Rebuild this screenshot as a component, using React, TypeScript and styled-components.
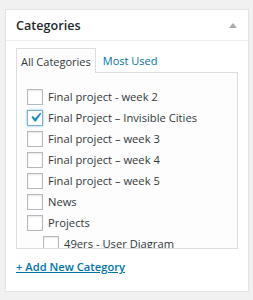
import React from "react";
import styled, { createGlobalStyle } from "styled-components";

type Category = { id: number; name: string; checked?: boolean; children?: Category[] };

const categories: Category[] = [
  { id: 1, name: "Final project - week 2" },
  { id: 2, name: "Final Project – Invisible Cities", checked: true },
  { id: 3, name: "Final project – week 3" },
  { id: 4, name: "Final project – week 4" },
  { id: 5, name: "Final project – week 5" },
  { id: 6, name: "News" },
  {
    id: 7,
    name: "Projects",
    children: [{ id: 8, name: "49ers - User Diagram" }],
  },
];

const CategoryList: React.FC<{ items: Category[]; nested?: boolean }> = ({ items, nested }) => (
  <List $nested={nested}>
    {items.map((item) => (
      <li key={item.id}>
        <Row>
          <CheckBox $checked={item.checked}>
            {item.checked && (
              <svg width="19" height="19" viewBox="0 0 20 20">
                <path d="M14.83 4.89l1.34.94-5.81 8.38H9.02L5.78 9.67l1.34-1.25 2.57 2.4z" fill="#1e8cbe" />
              </svg>
            )}
          </CheckBox>
          <Label>{item.name}</Label>
        </Row>
        {item.children && <CategoryList items={item.children} nested />}
      </li>
    ))}
  </List>
);

const App: React.FC = () => {
  return (
    <>
      <GlobalStyle />
      <Box>
        <Header>
          <Title>Categories</Title>
          <Toggle />
        </Header>
        <Inside>
          <Tabs>
            <Tab $active>All Categories</Tab>
            <Tab>Most Used</Tab>
          </Tabs>
          <TabPanel>
            <CategoryList items={categories} />
          </TabPanel>
          <AddLink href="#">+ Add New Category</AddLink>
        </Inside>
      </Box>
    </>
  );
};

export default App;

const GlobalStyle = createGlobalStyle`
  body {
    margin: 0;
    background: #f1f1f1;
    font-family: "Open Sans", "Noto Sans", sans-serif;
    color: #32373c;
  }
`;

const Box = styled.div`
  margin: 9px 4px 0 5px;
  height: 283px;
  box-sizing: border-box;
  background: #fff;
  border: 1px solid #e5e5e5;
  box-shadow: 0 1px 1px rgba(0, 0, 0, 0.04);
`;

const Header = styled.div`
  display: flex;
  align-items: center;
  justify-content: space-between;
  height: 30px;
  padding: 0 11px 0 10px;
  border-bottom: 1px solid #eee;
`;

const Title = styled.h3`
  margin: 0;
  font-size: 12.6px;
  font-weight: 600;
  color: #23282d;
`;

const Toggle = styled.span`
  width: 0;
  height: 0;
  border-left: 4px solid transparent;
  border-right: 4px solid transparent;
  border-bottom: 5px solid #a7aaad;
`;

const Inside = styled.div`
  padding: 7px 10px 0;
`;

const Tabs = styled.div`
  display: flex;
  gap: 2px;
`;

const Tab = styled.div<{ $active?: boolean }>`
  box-sizing: border-box;
  display: flex;
  align-items: center;
  padding: 0 4px;
  font-size: 11px;
  margin-bottom: -1px;
  position: relative;
  border: 1px solid ${(p) => (p.$active ? "#ddd" : "transparent")};
  border-bottom: none;
  background: ${(p) => (p.$active ? "#fdfdfd" : "transparent")};
  color: ${(p) => (p.$active ? "#32373c" : "#0073aa")};
  height: ${(p) => (p.$active ? "25px" : "24px")};
`;

const TabPanel = styled.div`
  height: 177px;
  box-sizing: border-box;
  overflow: hidden;
  border: 1px solid #ddd;
  background: #fdfdfd;
  padding: 15px 10px 0;
`;

const List = styled.ul<{ $nested?: boolean }>`
  list-style: none;
  margin: 0;
  padding: 0 0 0 ${(p) => (p.$nested ? "16px" : "0")};
`;

const Row = styled.label`
  display: flex;
  align-items: flex-start;
  height: 21px;
`;

const CheckBox = styled.span<{ $checked?: boolean }>`
  width: 16px;
  height: 16px;
  margin-top: 1px;
  box-sizing: border-box;
  flex: none;
  display: flex;
  align-items: center;
  justify-content: center;
  background: #fff;
  border: 1px solid ${(p) => (p.$checked ? "#7fb0d8" : "#b4b9be")};
  box-shadow: ${(p) =>
    p.$checked
      ? "0 0 2px rgba(30, 140, 190, 0.6)"
      : "inset 0 1px 2px rgba(0, 0, 0, 0.1)"};

  svg {
    flex: none;
    margin-top: -2px;
  }
`;

const Label = styled.span`
  margin-left: 5px;
  font-size: 11.2px;
  line-height: 18px;
  white-space: nowrap;
`;

const AddLink = styled.a`
  display: inline-block;
  margin-top: 10px;
  font-size: 11.2px;
  font-weight: 600;
  color: #0073aa;
  text-decoration: underline;
`;
